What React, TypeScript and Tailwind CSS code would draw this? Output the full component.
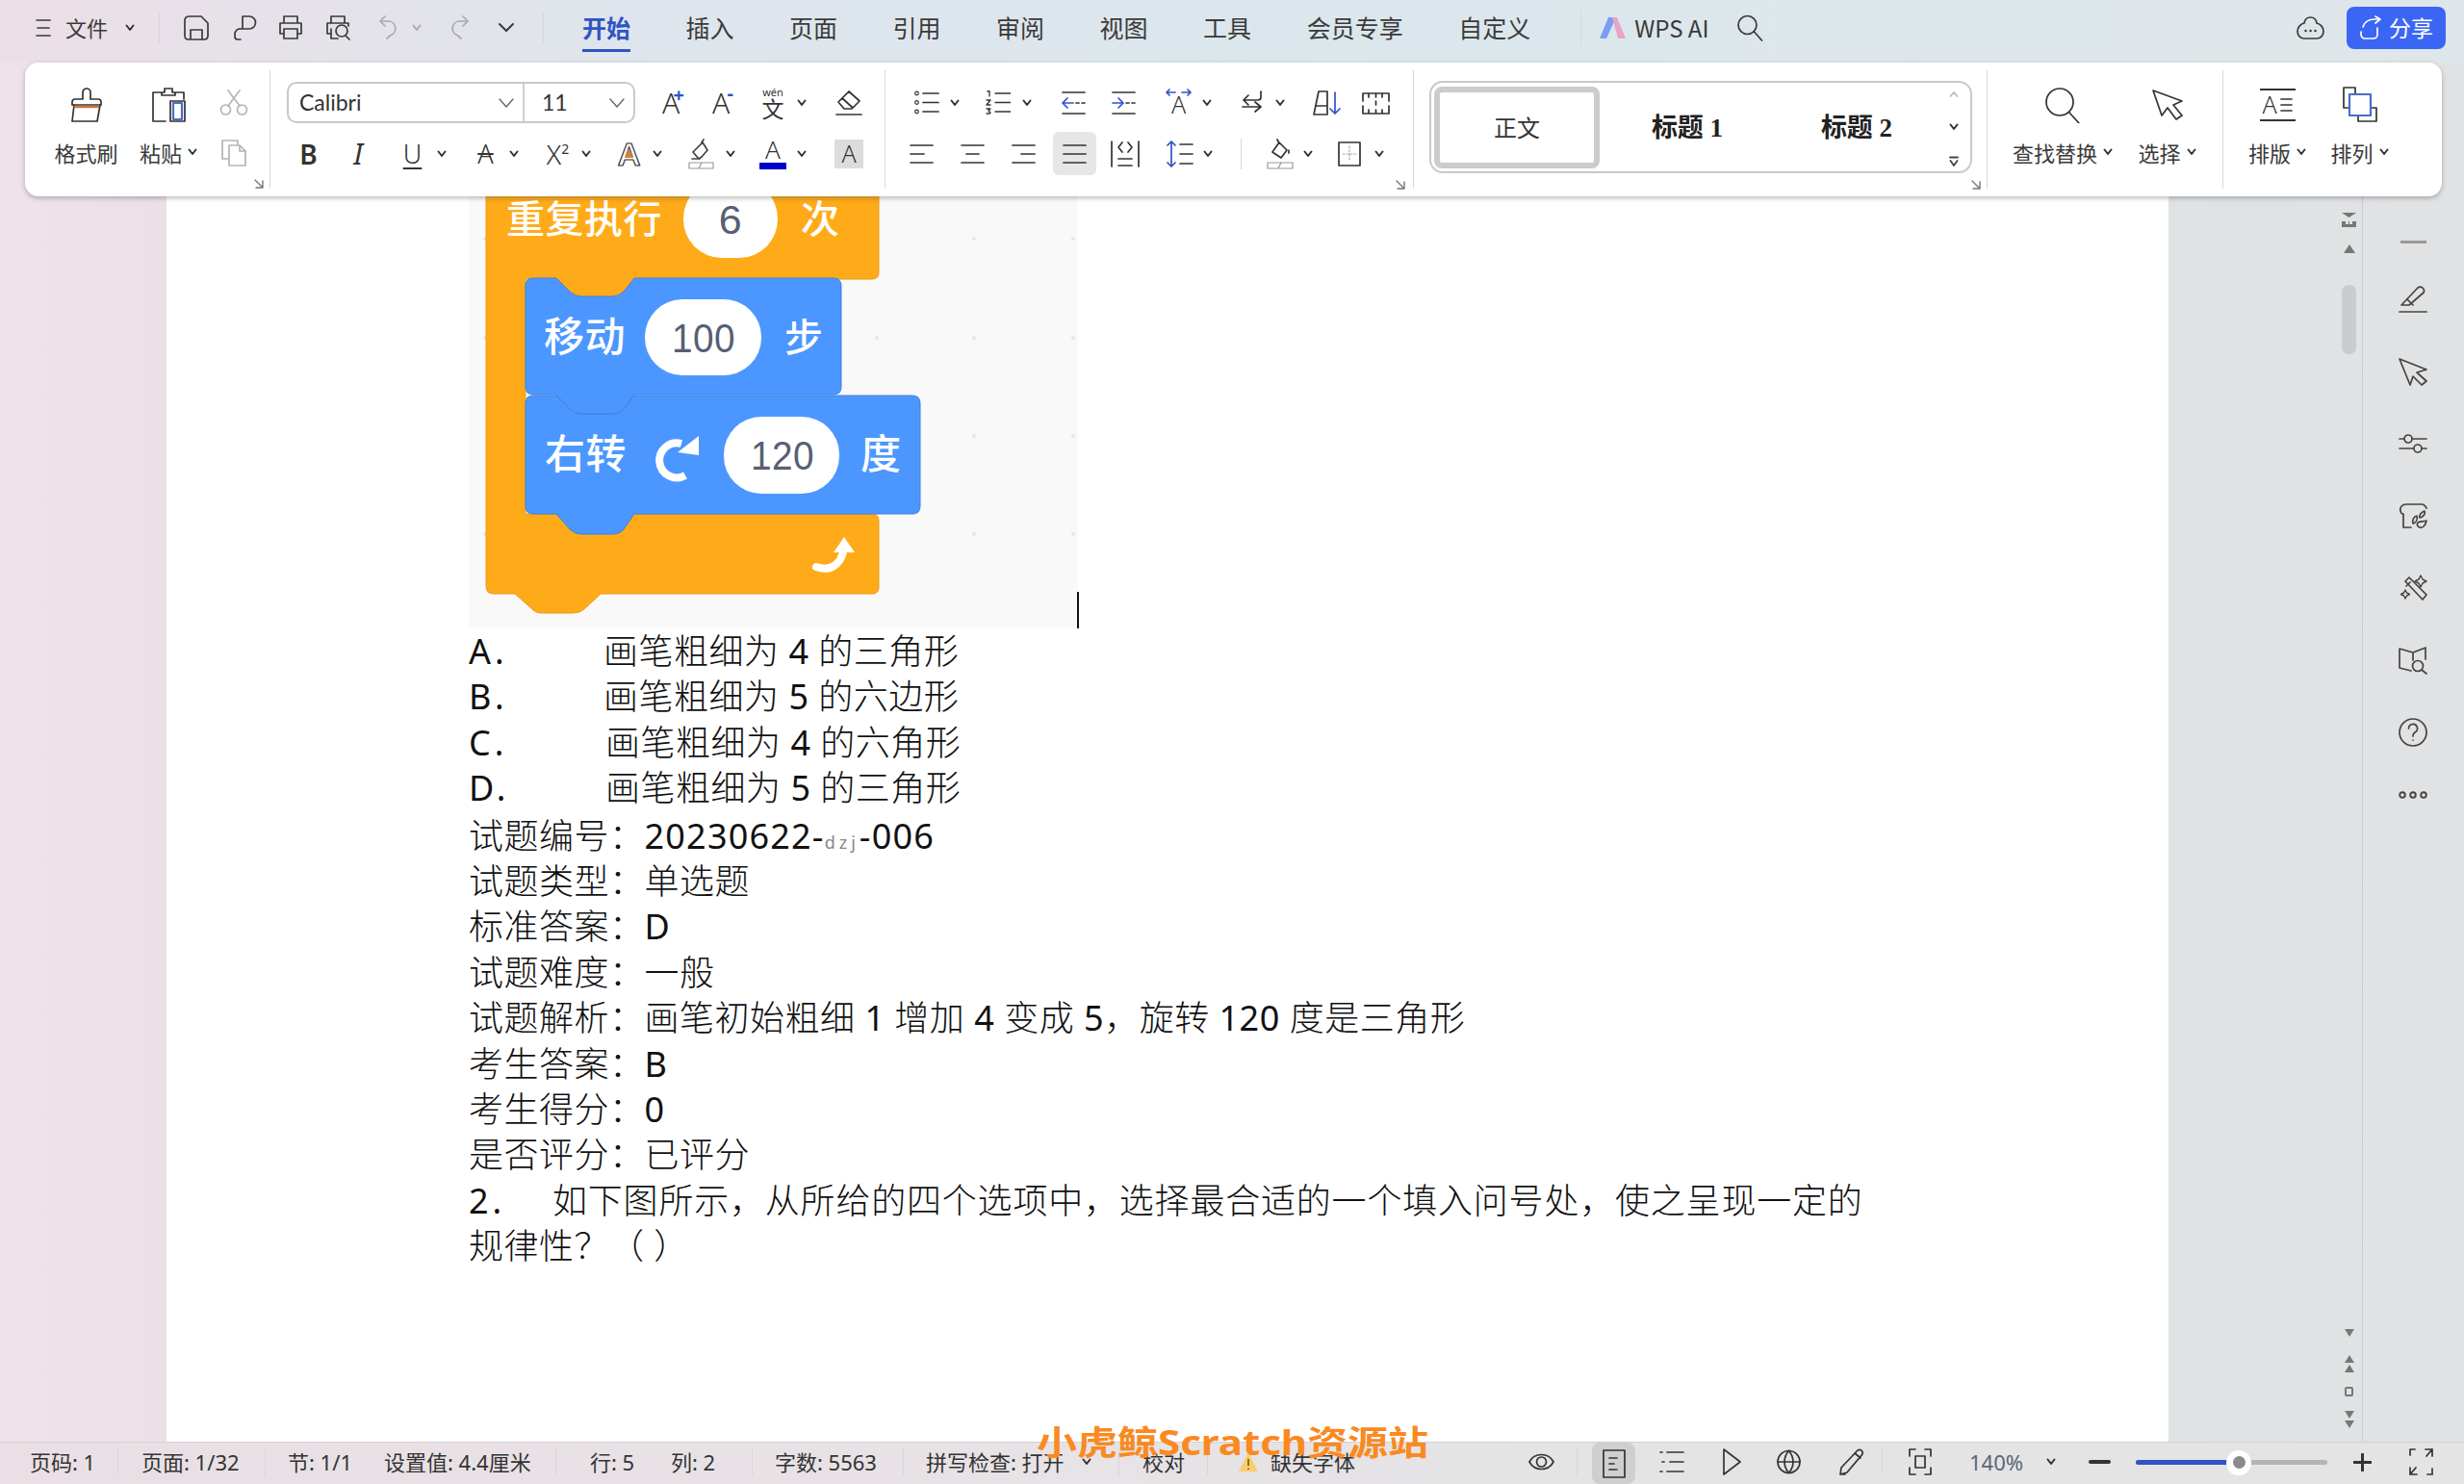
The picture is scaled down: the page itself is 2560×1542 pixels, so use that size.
import type { ReactNode } from "react";

function Svg({ w, h, className = "", children }: { w: number; h: number; className?: string; children: ReactNode }) {
  return (
    <svg
      width={w}
      height={h}
      viewBox={`0 0 ${w} ${h}`}
      fill="none"
      stroke="currentColor"
      strokeWidth="1.7"
      strokeLinecap="round"
      strokeLinejoin="round"
      className={`shrink-0 ${className}`}
    >
      {children}
    </svg>
  );
}

// small bold chevron used all over the ribbon
function Chev({ className = "" }: { className?: string }) {
  return (
    <Svg w={10} h={8} className={`text-[#333] ${className}`}>
      <path d="M1.5 1.5 5 6l3.5-4.5" strokeWidth="2" />
    </Svg>
  );
}

function Corner({ className = "" }: { className?: string }) {
  return (
    <Svg w={10} h={10} className={`absolute text-[#777] ${className}`}>
      <path d="M1 1l8 8M9 2v7H2" strokeWidth="1.4" />
    </Svg>
  );
}

function Sep({ className = "" }: { className?: string }) {
  return <div className={`w-px shrink-0 bg-[#d6d8da] ${className}`} />;
}

function Tab({ children, active = false }: { children: ReactNode; active?: boolean }) {
  return active ? (
    <div className="relative ml-[40px] text-[25px] font-bold leading-[57px] text-[#2f54c4]">
      {children}
      <div className="absolute bottom-[3px] left-0 h-[3px] w-full bg-[#2f54c4]" />
    </div>
  ) : (
    <div className="ml-[57.5px] text-[25px] leading-[57px] text-[#3a3a3a]">{children}</div>
  );
}

function TopBar() {
  return (
    <div className="flex h-[65px] items-center bg-[linear-gradient(90deg,#ecdfe7_0%,#dfe5ec_25%,#dbe7ed_55%,#dfe6e9_100%)] pb-[8px] pl-[37px] text-[#3a3a3a]">
      <Svg w={16} h={22}>
        <path d="M1 3h14M2 11h12M1 19h14" />
      </Svg>
      <div className="ml-[15px] text-[22px]">文件</div>
      <Chev className="ml-[18px]" />
      <Sep className="ml-[25px] h-[32px]" />
      <Svg w={28} h={27} className="ml-[24px]">
        <path d="M7 2h12l7 7v13q0 4-4 4H6q-4 0-4-4V6q0-4 5-4ZM8 26V16h12v10" />
      </Svg>
      <Svg w={26} h={27} className="ml-[23px]">
        <path d="M11 2h7a6.500 6.500 0 0 1 0 13H9a5.500 5.500 0 0 0-6 5.500V23a3 3 0 0 0 3 3h3M11 2v13" />
      </Svg>
      <Svg w={26} h={27} className="ml-[22px]">
        <path d="M6 9V2h14v7M6 20H2V9h22v11h-4M6 15h14v10H6z" />
      </Svg>
      <Svg w={27} h={27} className="ml-[23px]">
        <path d="M6 9V2h14v7M5 20H2V9h22v3M6 15v10h7" />
        <circle cx="17" cy="17" r="6" />
        <path d="m21 22 4 4" />
      </Svg>
      <Svg w={20} h={27} className="ml-[28px] text-[#a9a9a9]">
        <path d="M7 2 2 7l5 5M2 7h8a7.500 7.500 0 0 1 3 14.500L9 25" />
      </Svg>
      <Chev className="ml-[15px] text-[#aaa]" />
      <Svg w={20} h={27} className="ml-[30px] text-[#a9a9a9]">
        <path d="m13 2 5 5-5 5M18 7h-8a7.500 7.500 0 0 0-3 14.500l4 3.500" />
      </Svg>
      <Svg w={18} h={11} className="ml-[29px]">
        <path d="m2 2 7 7 7-7" strokeWidth="2" />
      </Svg>
      <Sep className="ml-[29px] h-[32px]" />
      <Tab active>开始</Tab>
      <Tab>插入</Tab>
      <Tab>页面</Tab>
      <Tab>引用</Tab>
      <Tab>审阅</Tab>
      <Tab>视图</Tab>
      <Tab>工具</Tab>
      <Tab>会员专享</Tab>
      <Tab>自定义</Tab>
      <Sep className="ml-[52px] h-[36px]" />
      <svg width="29" height="27" viewBox="0 0 29 27" className="ml-[18px] shrink-0">
        <path d="M10 3h8L8 25H1z" fill="#7d9cf5" />
        <path d="M14 3h5l9 22h-8z" fill="#e8a3c8" />
      </svg>
      <div className="ml-[8px] text-[24px]">WPS AI</div>
      <Svg w={28} h={28} className="ml-[29px]">
        <circle cx="11.500" cy="11" r="9.500" />
        <path d="m18.500 18 8 9" />
      </Svg>
      <Svg w={31} h={26} className="ml-auto">
        <path d="M15.500 2c4 0 6 3 6.500 6 4 1 7 4.500 7 8.500 0 5-3.500 7.500-7 7.500H9c-3.500 0-7-2.500-7-7.500C2 12.500 5 9 9 8c.5-3 2.500-6 6.500-6Z" />
        <path d="M10.500 16h.1M15.500 16h.1M20.500 16h.1" strokeWidth="2.400" />
      </Svg>
      <div className="ml-[22px] mr-[19px] flex h-[44px] w-[103px] items-center justify-center gap-[7px] rounded-[8px] bg-[#3b66f5] text-[23px] text-white">
        <Svg w={24} h={26}>
          <path d="M19 13v7a4 4 0 0 1-4 4H6a4 4 0 0 1-4-4v-3M4 12c1-5 6-8 12-8h6M17 1l5 3-5 4" />
        </Svg>
        分享
      </div>
    </div>
  );
}

function LabelTool({ icon, label, chev = false, className = "" }: { icon: ReactNode; label: string; chev?: boolean; className?: string }) {
  return (
    <div className={`flex shrink-0 flex-col items-center ${className}`}>
      <div className="flex h-[37px] items-center">{icon}</div>
      <div className="mt-[16px] flex h-[30px] items-center gap-[6px] whitespace-nowrap text-[22px] leading-[30px] text-[#3a3a3a]">
        {label}
        {chev && <Chev />}
      </div>
    </div>
  );
}

function Letter({ children, className = "" }: { children: ReactNode; className?: string }) {
  return <span className={`flex shrink-0 items-center justify-center font-[family-name:'Noto_Sans',sans-serif] leading-none text-[#333] ${className}`}>{children}</span>;
}

function ClipboardGroup() {
  return (
    <div className="relative flex w-[255px] shrink-0 pt-[25px]">
      <LabelTool
        className="ml-[30px] w-[67px]"
        label="格式刷"
        icon={
          <Svg w={34} h={36} className="text-[#333]">
            <path d="M13 12V5a4 4 0 0 1 8 0v7h8a3 3 0 0 1 3 3v3H2v-3a3 3 0 0 1 3-3Z" />
            <path d="M4 18l-2 17h26l3-17" />
            <path d="M5 20h24" stroke="#c8793c" strokeWidth="2.400" />
          </Svg>
        }
      />
      <LabelTool
        className="ml-[22px] w-[60px]"
        label="粘贴"
        chev
        icon={
          <Svg w={37} h={36} className="text-[#333]">
            <path d="M11 5H2v30h13M25 5h9v7M11 8V5h3V1h8v4h3v3Z" />
            <path d="M20 14h15v21H20z" />
            <path d="M23 16h9v17h-9z" stroke="#4a6fc4" strokeWidth="2.200" />
          </Svg>
        }
      />
      <div className="ml-[23px] flex w-[30px] flex-col text-[#b5b5b5]">
        <Svg w={30} h={27} className="mt-[3px]">
          <circle cx="6.500" cy="21" r="5" />
          <circle cx="23.500" cy="21" r="5" />
          <path d="M9 17 21 1M21 17 9 1" />
        </Svg>
        <Svg w={30} h={29} className="mt-[24px]">
          <path d="M19 6V2H3v19h6" />
          <path d="M10 7h11l6 6v15H10zM21 7v6h6" />
        </Svg>
      </div>
      <Corner className="bottom-[8px] right-[7px]" />
    </div>
  );
}

function FontGroup() {
  return (
    <div className="flex w-[639px] shrink-0 flex-col pt-[20px]">
      <div className="flex h-[43px] items-center">
        <div className="ml-[17px] flex h-[43px] w-[362px] rounded-[10px] border-2 border-[#c9c9c9] text-[#333]">
          <div className="flex w-[245px] items-center justify-between border-r-2 border-[#d0d0d0] pl-[11px] pr-[9px] font-[family-name:Lato,sans-serif] text-[23px]">
            Calibri
            <Svg w={16} h={10} className="text-[#666]">
              <path d="m1 1 7 8 7-8" strokeWidth="1.400" />
            </Svg>
          </div>
          <div className="flex flex-1 items-center justify-between pl-[18px] pr-[9px] font-[family-name:Lato,sans-serif] text-[23px]">
            11
            <Svg w={16} h={10} className="text-[#666]">
              <path d="m1 1 7 8 7-8" strokeWidth="1.400" />
            </Svg>
          </div>
        </div>
        <Letter className="relative ml-[23px] w-[28px] text-[30px] font-light">
          A<span className="absolute -top-[3px] right-0 text-[20px] font-bold text-[#2f54c4]">+</span>
        </Letter>
        <Letter className="relative ml-[25px] w-[26px] text-[30px] font-light">
          A<span className="absolute -top-[5px] right-0 text-[20px] font-bold text-[#2f54c4]">-</span>
        </Letter>
        <div className="ml-[26px] flex w-[30px] shrink-0 flex-col items-center leading-none text-[#333]">
          <span className="font-[family-name:'Noto_Sans',sans-serif] text-[11px]">wén</span>
          <span className="text-[23px]">文</span>
        </div>
        <Chev className="ml-[10px]" />
        <Svg w={30} h={30} className="ml-[29px] text-[#333]">
          <path d="m10 21-6-7L15 3l11 10-8 8ZM8 10l11 10M2 27h26" />
        </Svg>
      </div>
      <div className="mt-[9px] flex h-[45px] items-center">
        <Letter className="ml-[32px] w-[15px] text-[28px] font-semibold">B</Letter>
        <Letter className="ml-[34px] w-[20px] font-[family-name:'Liberation_Serif',serif] text-[30px] italic">I</Letter>
        <Letter className="ml-[38px] w-[17px] text-[27px] font-light underline underline-offset-4">U</Letter>
        <Chev className="ml-[17px]" />
        <Letter className="ml-[28px] w-[25px] text-[27px] font-light line-through">A</Letter>
        <Chev className="ml-[12px]" />
        <Letter className="ml-[28px] w-[25px] text-[28px] font-light">
          X<span className="-mt-[10px] text-[14px] font-normal">2</span>
        </Letter>
        <Chev className="ml-[12px]" />
        <div className="relative ml-[26px] flex w-[27px] shrink-0 justify-center">
          <Letter className="text-[33px] font-semibold text-white [-webkit-text-stroke:1.2px_#333]">A</Letter>
          <svg width="9" height="10" viewBox="0 0 9 10" className="absolute left-[9px] top-[11px]">
            <path d="M4.500 0 9 10H0Z" fill="#d4803c" />
          </svg>
        </div>
        <Chev className="ml-[11px]" />
        <Svg w={27} h={32} className="ml-[27px] text-[#444]">
          <path d="M11 21 5 14 15 4l5 8-6 7ZM16 1l-2 3M12 21H4" />
          <path d="M1 25h25v6H1zM14 25l-3 6" stroke="#999" strokeWidth="1.200" />
        </Svg>
        <Chev className="ml-[12px]" />
        <div className="ml-[25px] flex w-[28px] shrink-0 flex-col items-center">
          <Letter className="h-[24px] text-[26px] font-light">A</Letter>
          <div className="mt-[2px] h-[7px] w-[28px] bg-[#0000cc]" />
        </div>
        <Chev className="ml-[11px]" />
        <Letter className="ml-[29px] h-[30px] w-[30px] bg-[#dcdcdc] text-[25px] font-light">A</Letter>
      </div>
    </div>
  );
}

function AlignIcon({ d }: { d: string }) {
  return (
    <Svg w={25} h={24} className="text-[#333]">
      <path d={d} />
    </Svg>
  );
}

function ParagraphGroup() {
  return (
    <div className="relative flex w-[549px] shrink-0 flex-col pt-[20px] text-[#333]">
      <div className="flex h-[43px] items-center">
        <Svg w={26} h={25} className="ml-[30px]">
          <path d="M9 3h16M9 12.500h16M9 22h16" />
          <circle cx="2.500" cy="3" r="1.800" strokeWidth="1.200" />
          <circle cx="2.500" cy="12.500" r="1.800" strokeWidth="1.200" />
          <circle cx="2.500" cy="22" r="1.800" strokeWidth="1.200" />
        </Svg>
        <Chev className="ml-[11px]" />
        <Svg w={26} h={25} className="ml-[27px]">
          <path d="M10 3h16M10 12.500h16M10 22h16M2 1l2-0.500V6M1 10h4l-4 5h4M1 19h4l-2 2 2 2-1 1H1" strokeWidth="1.300" />
        </Svg>
        <Chev className="ml-[12px]" />
        <Svg w={25} h={26} className="ml-[31px]">
          <path d="M1 2h23M1 24h23M15 13h3M21 13h3" />
          <path d="M12 13H1M6 8l-5 5 5 5" stroke="#2f54c4" />
        </Svg>
        <Svg w={25} h={26} className="ml-[27px]">
          <path d="M1 2h23M1 24h23M15 13h3M21 13h3" />
          <path d="M1 13h11M7 8l5 5-5 5" stroke="#2f54c4" />
        </Svg>
        <div className="relative ml-[30px] flex h-[28px] w-[29px] shrink-0 items-end justify-center">
          <Letter className="text-[25px] font-light">A</Letter>
          <Svg w={29} h={10} className="absolute left-0 top-[-1px] text-[#2f54c4]">
            <path d="M11 4H2M5 1 2 4l3 3M18 4h9M24 1l3 3-3 3" />
          </Svg>
        </div>
        <Chev className="ml-[10px]" />
        <Svg w={23} h={26} className="ml-[30px]">
          <path d="M21 1v6a3 3 0 0 1-3 3H3M8 5l-5 5 5 5M2 17h19M15 12l6 5-6 5" />
        </Svg>
        <Chev className="ml-[13px]" />
        <Svg w={30} h={26} className="ml-[28px]">
          <path d="M7 1h9v24H2ZM4 16h12" />
          <path d="M24 2v22M19 19l5 5 5-5" stroke="#2f54c4" />
        </Svg>
        <Svg w={29} h={24} className="ml-[22px]">
          <path d="M1 10V2h27v8M1 15v8h27v-8M7 2v4M14.500 2v4M21 2v4M7 23v-4M14.500 23v-4M21 23v-4M14.500 10v4" />
        </Svg>
      </div>
      <div className="mt-[9px] flex h-[45px] items-center">
        <div className="ml-[25px]">
          <AlignIcon d="M1 3h23M1 12h14M1 21h23" />
        </div>
        <div className="ml-[28px]">
          <AlignIcon d="M1 3h23M6 12h13M1 21h23" />
        </div>
        <div className="ml-[28px]">
          <AlignIcon d="M1 3h23M10 12h14M1 21h23" />
        </div>
        <div className="ml-[18px] flex h-[45px] w-[45px] items-center justify-center rounded-[6px] bg-[#e6e6e6]">
          <AlignIcon d="M1 3h23M1 12h23M1 21h23" />
        </div>
        <Svg w={30} h={30} className="ml-[15px]">
          <path d="M1 2v26M29 2v26M8 20h14M8 27h14M12 3 8 8l4 5M18 3l4 5-4 5" />
        </Svg>
        <Svg w={28} h={30} className="ml-[28px]">
          <path d="M14 5h13M14 15h13M14 25h13" />
          <path d="M5 2v26M1 6l4-4 4 4M1 24l4 4 4-4" stroke="#2f54c4" />
        </Svg>
        <Chev className="ml-[10px]" />
        <Sep className="ml-[29px] h-[32px]" />
        <Svg w={28} h={32} className="ml-[26px]">
          <path d="M6 14l7-10 8 8-6 8ZM12 3l-1-2M23 12v3" />
          <path d="M1 25h26v6H1zM15 25l-3 6" stroke="#999" strokeWidth="1.200" />
        </Svg>
        <Chev className="ml-[10px]" />
        <Svg w={24} h={26} className="ml-[26px]">
          <path d="M1 1h22v24H1z" />
          <path d="M12 5v16M5 13h14" stroke="#aaa" strokeDasharray="2 2" strokeWidth="1.200" />
        </Svg>
        <Chev className="ml-[14px]" />
      </div>
      <Corner className="bottom-[7px] right-[9px]" />
    </div>
  );
}

function StylesGroup() {
  return (
    <div className="relative w-[596px] shrink-0 pl-[16px] pt-[19px]">
      <div className="flex h-[96px] w-[564px] items-center rounded-[14px] border-2 border-[#c9c9c9] pl-[3px] font-[family-name:'Liberation_Serif','Noto_Sans_CJK_SC',serif]">
        <div className="flex h-[85px] w-[172px] shrink-0 items-center justify-center rounded-[8px] border-[6px] border-[#cccccc] font-[family-name:'Noto_Sans_CJK_SC',sans-serif] text-[24px] text-[#333]">
          正文
        </div>
        <div className="ml-[39px] mt-[2px] w-[104px] shrink-0 text-center text-[27px] font-bold text-[#222]">标题 1</div>
        <div className="ml-[72px] mt-[2px] w-[104px] shrink-0 text-center text-[27px] font-bold text-[#222]">标题 2</div>
        <div className="ml-[44px] flex h-[84px] flex-col items-center justify-between text-[#444]">
          <Svg w={10} h={8} className="mt-[4px] text-[#bbb]">
            <path d="M1.500 6 5 2l3.500 4" strokeWidth="1.800" />
          </Svg>
          <Chev />
          <Svg w={10} h={12}>
            <path d="M1 1.500h8M1.500 5 5 10l3.500-5" strokeWidth="1.800" />
          </Svg>
        </div>
      </div>
      <Corner className="bottom-[7px] left-[579px]" />
    </div>
  );
}

function Ribbon() {
  return (
    <div className="relative z-10 ml-[26px] flex h-[139px] w-[2511px] items-stretch rounded-[14px] bg-white shadow-[0_2px_5px_rgba(60,60,70,0.35)]">
      <ClipboardGroup />
      <Sep className="-ml-px my-[8px]" />
      <FontGroup />
      <Sep className="-ml-px my-[8px]" />
      <ParagraphGroup />
      <Sep className="-ml-px my-[8px]" />
      <StylesGroup />
      <Sep className="-ml-px my-[8px]" />
      <div className="flex w-[245px] shrink-0 pt-[25px]">
        <LabelTool
          className="ml-[25px] w-[106px]"
          label="查找替换"
          chev
          icon={
            <Svg w={38} h={38} className="text-[#333]">
              <circle cx="16" cy="16" r="14" />
              <path d="m26 27 10 11" />
            </Svg>
          }
        />
        <LabelTool
          className="ml-[25px] w-[61px]"
          label="选择"
          chev
          icon={
            <Svg w={34} h={34} className="text-[#333]">
              <path d="M2 2l30 11-9 4 9 11-6 4-9-12-6 8Z" />
            </Svg>
          }
        />
      </div>
      <Sep className="-ml-px my-[8px]" />
      <div className="flex flex-1 pt-[25px]">
        <LabelTool
          className="ml-[26px] w-[60px]"
          label="排版"
          chev
          icon={
            <div className="flex h-[34px] w-[37px] flex-col justify-between border-y-2 border-[#333] text-[#333]">
              <div className="flex flex-1 items-center justify-center gap-[3px] text-[25px] font-light leading-none">
                <span className="font-[family-name:'Noto_Sans',sans-serif]">A</span>
                <Svg w={13} h={16}>
                  <path d="M1 2h11M1 8h11M1 14h11" />
                </Svg>
              </div>
            </div>
          }
        />
        <LabelTool
          className="ml-[25px] w-[61px]"
          label="排列"
          chev
          icon={
            <Svg w={37} h={37} className="text-[#333]">
              <path d="M14 8V1H2v21h6M30 22h6v14H17v-6" />
              <path d="M8 8h22v22H8z" stroke="#4a6fc4" strokeWidth="2.200" />
            </Svg>
          }
        />
      </div>
    </div>
  );
}

function ScratchBlocks() {
  const dots = [
    [504, 248], [1012, 248], [1115, 248], [504, 351], [911, 351], [1012, 351], [1115, 351],
    [1012, 453], [1115, 453], [504, 555], [1012, 555], [1115, 555],
  ];
  return (
    <svg width="633" height="449" viewBox="487 204 633 449" className="block bg-[#f9f9f9] font-[family-name:'Noto_Sans_CJK_SC',sans-serif]">
      {dots.map(([x, y]) => (
        <circle key={`${x}-${y}`} cx={x} cy={y} r="2" fill="#e6e6e6" />
      ))}
      <path
        d="M505 190H913V283Q913 290 906 290H546V534H906Q913 534 913 541V610Q913 617 906 617H624L608 632Q603 637 596 637H563Q556 637 552 632L535 617H513Q505 617 505 609Z"
        fill="#ffab19"
        stroke="#e79a17"
      />
      <path
        d="M546 419Q546 411 554 411H578L592 425Q597 430 604 430H636Q643 430 648 425L659 411H948Q956 411 956 419V526Q956 534 948 534H659L648 550Q644 555 636 555H604Q597 555 592 550L578 534H554Q546 534 546 526Z"
        fill="#4c97ff"
        stroke="#3f82e0"
      />
      <path d="M570 285H665V312H570Z" fill="#ffab19" />
      <path
        d="M546 297Q546 289 554 289H578L592 303Q597 308 604 308H636Q643 308 648 303L659 289H866Q874 289 874 297V402Q874 410 866 410H659L648 425Q644 430 636 430H604Q597 430 592 425L578 410H554Q546 410 546 402Z"
        fill="#4c97ff"
        stroke="#3f82e0"
      />
      <rect x="710" y="187" width="98" height="81" rx="40" fill="#fff" />
      <rect x="670" y="311" width="121" height="79" rx="39" fill="#fff" />
      <rect x="752" y="433" width="120" height="80" rx="39" fill="#fff" />
      <g fill="#fff" fontSize="40" fontWeight="500">
        <text x="526" y="242">重复执行</text>
        <text x="832" y="242">次</text>
        <text x="565" y="365" fontSize="42">移动</text>
        <text x="815" y="365">步</text>
        <text x="566" y="487" fontSize="42">右转</text>
        <text x="894" y="487" fontSize="42">度</text>
      </g>
      <g fill="#575e75" fontSize="43" textAnchor="middle" className="font-[family-name:'Liberation_Sans',sans-serif]">
        <text x="759" y="243">6</text>
        <text x="731" y="366" textLength="66" lengthAdjust="spacingAndGlyphs">100</text>
        <text x="813" y="488" textLength="66" lengthAdjust="spacingAndGlyphs">120</text>
      </g>
      <path d="M708 461A18 18 0 1 0 712 494" fill="none" stroke="#fff" strokeWidth="8" />
      <path d="M726 453V473L704 470Z" fill="#fff" />
      <path d="M848 589c14 5 26-1 29-20" fill="none" stroke="#fff" strokeWidth="8" strokeLinecap="round" />
      <path d="M866 574l11-16 11 16Z" fill="#fff" />
    </svg>
  );
}

// digits and latin letters sit darker than the thin CJK text on the page
function N({ children }: { children: ReactNode }) {
  return <span className="font-normal">{children}</span>;
}

function Page() {
  return (
    <div className="w-[2080px] shrink-0 overflow-hidden bg-white pl-[314px] font-[family-name:'Noto_Sans','Noto_Sans_CJK_SC',sans-serif] text-[36px] font-light leading-[47.400px] tracking-[0.5px] text-[#111]">
      <div className="flex items-end">
        <ScratchBlocks />
        <div className="-ml-px h-[38px] w-[2px] bg-[#111]" />
      </div>
      <div className="flex h-[47.400px]">
        <span className="w-[140px] font-normal tracking-[4px]">A.</span>
        <div>画笔粗细为 <N>4</N> 的三角形</div>
      </div>
      <div className="flex h-[47.400px]">
        <span className="w-[140px] font-normal tracking-[4px]">B.</span>
        <div>画笔粗细为 <N>5</N> 的六边形</div>
      </div>
      <div className="flex h-[47.400px]">
        <span className="w-[142px] font-normal tracking-[4px]">C.</span>
        <div>画笔粗细为 <N>4</N> 的六角形</div>
      </div>
      <div className="flex h-[47.400px]">
        <span className="w-[142px] font-normal tracking-[4px]">D.</span>
        <div>画笔粗细为 <N>5</N> 的三角形</div>
      </div>
      <div className="mt-[2px] h-[47.400px]">
        试题编号：<span className="font-normal tracking-[1.2px]">20230622-<span className="text-[18px] tracking-[4px] text-[#888]">dzj</span>-006</span>
      </div>
      <div className="h-[47.400px]">试题类型：单选题</div>
      <div className="h-[47.400px]">标准答案：<N>D</N></div>
      <div className="h-[47.400px]">试题难度：一般</div>
      <div className="h-[47.400px]">试题解析：画笔初始粗细 <N>1</N> 增加 <N>4</N> 变成 <N>5</N>，旋转 <N>120</N> 度是三角形</div>
      <div className="h-[47.400px]">考生答案：<N>B</N></div>
      <div className="h-[47.400px]">考生得分：<N>0</N></div>
      <div className="h-[47.400px]">是否评分：已评分</div>
      <div className="flex h-[47.400px] tracking-[0.8px]">
        <span className="w-[87px] font-normal tracking-[4px]">2.</span>
        <div>如下图所示，从所给的四个选项中，选择最合适的一个填入问号处，使之呈现一定的</div>
      </div>
      <div>规律性？（ ）</div>
    </div>
  );
}

function ScrollColumn() {
  return (
    <div className="flex w-[202px] shrink-0 justify-end border-r border-[#c9cbcd] pr-[6px]">
      <div className="flex w-[15px] flex-col items-center pb-[14px] pt-[17px] text-[#777]">
        <svg width="15" height="15" viewBox="0 0 15 15" fill="currentColor">
          <path d="M0 0h15l-7.500 5ZM0 9h4v3h3V9h1v3h3V9h4v6H0Z" />
        </svg>
        <div className="mt-[18px] h-0 w-0 border-x-[6px] border-b-[9px] border-x-transparent border-b-[#777]" />
        <div className="mt-[33px] h-[72px] w-[15px] rounded-[7px] bg-[#c9ccd0]" />
        <div className="mt-auto h-0 w-0 border-x-[5px] border-t-[8px] border-x-transparent border-t-[#777]" />
        <div className="mt-[19px] flex flex-col gap-[2px]">
          <div className="h-0 w-0 border-x-[5px] border-b-[8px] border-x-transparent border-b-[#777]" />
          <div className="h-0 w-0 border-x-[5px] border-b-[8px] border-x-transparent border-b-[#777]" />
        </div>
        <div className="mt-[15px] h-[10px] w-[9px] rounded-[2px] border-2 border-[#777]" />
        <div className="mt-[15px] flex flex-col gap-[2px]">
          <div className="h-0 w-0 border-x-[5px] border-t-[8px] border-x-transparent border-t-[#777]" />
          <div className="h-0 w-0 border-x-[5px] border-t-[8px] border-x-transparent border-t-[#777]" />
        </div>
      </div>
    </div>
  );
}

function SidePanel() {
  return (
    <div className="flex flex-1 flex-col items-center gap-[45px] pr-[1px] pt-[46px] text-[#444]">
      <div className="-mb-[1px] h-[3px] w-[27px] bg-[#999]" />
      <Svg w={30} h={30} className="-mt-[1px]">
        <path d="M3 21 20 3a4 4 0 0 1 6 5L11 21ZM1 28h28" />
        <path d="m9 15 6 6" />
      </Svg>
      <Svg w={30} h={30}>
        <path d="M1 2l28 11-10 3 10 9-5 4-9-9-3 9Z" />
      </Svg>
      <Svg w={30} h={30}>
        <circle cx="10" cy="10" r="4" />
        <circle cx="20" cy="20" r="4" />
        <path d="M1 10h5M14 10h15M1 20h15M24 20h5" />
      </Svg>
      <Svg w={30} h={30}>
        <path d="M8 3h16c2 0 4 2 5 4M8 3C4 3 1 6 2 10c0 2 2 3 3 3v14h8M15 23c-1-5 2-8 4-8 1 4-1 7-4 8ZM22 27c-3-1-3-4-2-5 3-2 8-1 9-2-1 5-4 8-7 7ZM22 17c-1-3 2-6 5-7 1 3-1 6-5 7Z" />
      </Svg>
      <Svg w={30} h={30}>
        <path d="M7 8l4-4 18 18-4 5ZM12 9l-4 4" />
        <path d="M23 2l2 4 4 2-4 2-2 4-2-4-4-2 4-2ZM7 17l1.500 3 3 1.500-3 1.500L7 26l-1.500-3-3-1.500 3-1.500Z" strokeWidth="1.400" />
      </Svg>
      <Svg w={30} h={30}>
        <path d="M13 26 1 23V3l14 4 13-5v12M15 7v8" />
        <circle cx="20" cy="21" r="5.500" />
        <path d="m24 25 5 4" />
      </Svg>
      <Svg w={30} h={30}>
        <circle cx="15" cy="15" r="14" />
        <path d="M10.500 11a4.500 4.500 0 1 1 6.500 4c-1.500 1-2 2-2 4M15 23v.1" />
      </Svg>
      <Svg w={30} h={10}>
        <circle cx="4" cy="5" r="2.800" strokeWidth="1.900" />
        <circle cx="15" cy="5" r="2.800" strokeWidth="1.900" />
        <circle cx="26" cy="5" r="2.800" strokeWidth="1.900" />
      </Svg>
    </div>
  );
}

function StatusBar() {
  return (
    <div className="relative z-10 flex h-[44px] items-center whitespace-nowrap border-t border-[#d3d0d3] bg-[linear-gradient(90deg,#e9dfe5_0%,#e8e2e6_35%,#e4e4e5_65%,#e4e4e4_100%)] pb-[3px] font-[family-name:'Noto_Sans','Noto_Sans_CJK_SC',sans-serif] text-[22px] text-[#333]">
      <span className="ml-[31px] w-[91px]">页码: 1</span>
      <Sep className="h-[28px]" />
      <span className="ml-[24px] w-[128px]">页面: 1/32</span>
      <Sep className="h-[28px]" />
      <span className="ml-[23px] w-[100px]">节: 1/1</span>
      <span className="w-[178px]">设置值: 4.4厘米</span>
      <Sep className="h-[28px]" />
      <span className="ml-[35px] w-[84px]">行: 5</span>
      <span className="w-[84px]">列: 2</span>
      <Sep className="h-[28px]" />
      <span className="ml-[23px] w-[133px]">字数: 5563</span>
      <Sep className="h-[28px]" />
      <span className="ml-[23px] w-[162px]">拼写检查: 打开</span>
      <Chev />
      <Sep className="ml-[28px] h-[28px]" />
      <span className="ml-[24px] w-[67px]">校对</span>
      <Sep className="h-[28px]" />
      <svg width="22" height="24" viewBox="0 0 22 24" className="ml-[31px] shrink-0">
        <path d="M11 2 21 22H1Z" fill="#f5cf6e" />
        <path d="M11 9v7M11 18.500v1.500" stroke="#9a6a10" strokeWidth="2" />
      </svg>
      <span className="ml-[12px] w-[268px]">缺失字体</span>
      <Svg w={27} h={24}>
        <path d="M1 12C6 2 21 2 26 12 21 22 6 22 1 12Z" />
        <circle cx="13.500" cy="12" r="5" />
      </Svg>
      <Sep className="ml-[23px] h-[28px]" />
      <div className="-mb-[3px] ml-[15px] flex h-[43px] w-[45px] items-center justify-center rounded-[8px] bg-[#cfcfcf]">
        <Svg w={24} h={30}>
          <path d="M1 1h22v28H1zM7 9h8M7 15h5M7 21h8" />
        </Svg>
      </div>
      <Svg w={26} h={26} className="ml-[25px]">
        <path d="M8 3h17M11 13h14M8 23h17M1 3h2M3 13h2M1 23h2" />
      </Svg>
      <Svg w={21} h={30} className="ml-[39px]">
        <path d="M2 2l17 13L2 28Z" />
      </Svg>
      <Svg w={25} h={26} className="ml-[36px]">
        <circle cx="12.500" cy="13" r="11.500" />
        <path d="M1 13h23M12.500 1.500c-6 7-6 16 0 23M12.500 1.500c6 7 6 16 0 23" />
      </Svg>
      <Svg w={33} h={30} className="ml-[35px]">
        <path d="M24 3c3-2 6 1 5 4L13 26l-7 2 1-7ZM21 6l6 5M6 28h5" />
      </Svg>
      <Sep className="ml-[16px] h-[28px]" />
      <Svg w={24} h={28} className="ml-[27px]">
        <path d="M1 8V1h6M17 1h6v7M23 20v7h-6M7 27H1v-7M7 8h10v12H7z" />
      </Svg>
      <span className="ml-[39px] w-[80px] text-[#5a6478]">140%</span>
      <Chev />
      <div className="ml-[34px] h-[4px] w-[23px] rounded-full bg-[#333]" />
      <div className="relative ml-[26px] h-[5px] w-[199px] rounded-full bg-[#b5b5b5]">
        <div className="h-[5px] w-[97px] rounded-full bg-[#2f54c4]" />
        <div className="absolute left-[94px] top-[-10px] flex h-[26px] w-[26px] items-center justify-center rounded-full bg-white">
          <div className="h-[13px] w-[13px] rounded-full bg-[#8b8b8b]" />
        </div>
      </div>
      <Svg w={19} h={19} className="ml-[27px]">
        <path d="M1 9.500h17M9.500 1v17" strokeWidth="3" />
      </Svg>
      <Svg w={25} h={28} className="ml-[39px]">
        <path d="M17 1h7v7M24 1l-6 7M8 27H1v-7M1 27l6-7M1 7V1h5M24 21v6h-5" />
      </Svg>
      <div className="absolute left-[1077px] top-[-22px] scale-y-[0.85] text-[42px] font-bold leading-[42px] text-[#f98a1f]">
        小虎鲸Scratch资源站
      </div>
    </div>
  );
}

export default function App() {
  return (
    <div className="flex h-[1542px] w-[2560px] flex-col overflow-hidden bg-[linear-gradient(90deg,#f0e2ea_0%,#ecdfe8_7%,#dfe3e6_88%,#e1e2e3_100%)] font-[family-name:'Noto_Sans_CJK_SC','Noto_Sans',sans-serif]">
      <TopBar />
      <Ribbon />
      <div className="flex min-h-0 flex-1">
        <div className="w-[173px] shrink-0" />
        <Page />
        <ScrollColumn />
        <SidePanel />
      </div>
      <StatusBar />
    </div>
  );
}
